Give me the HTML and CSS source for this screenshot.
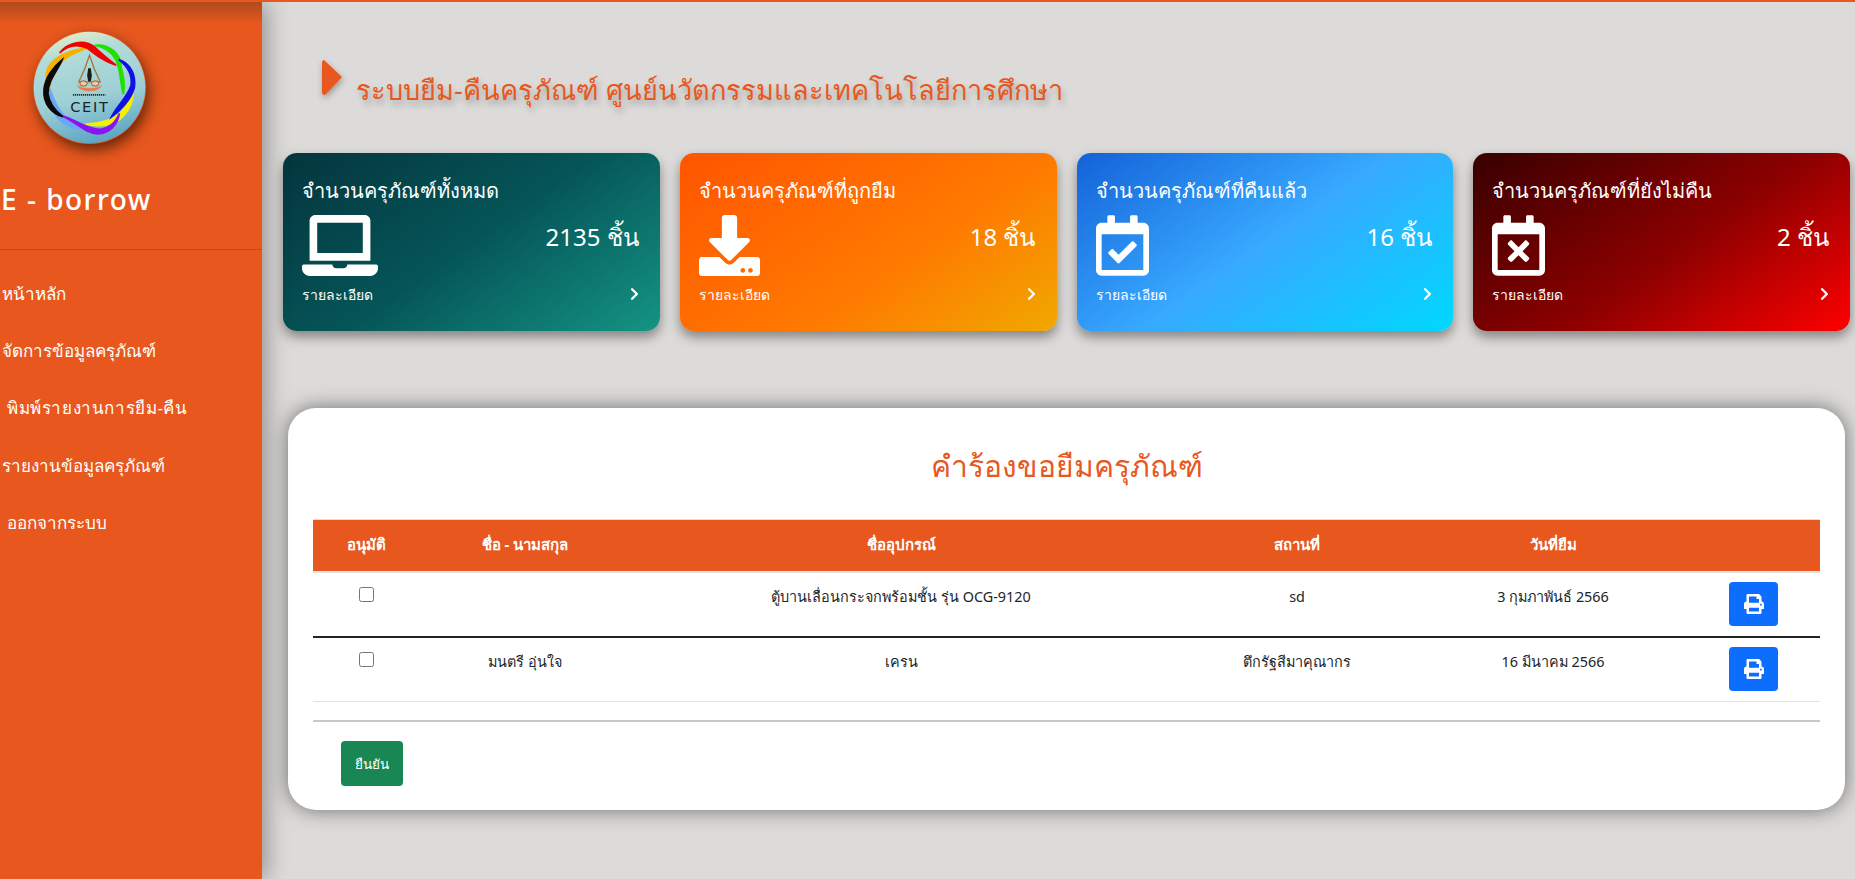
FILE: index.html
```html
<!DOCTYPE html>
<html lang="th">
<head>
    <meta charset="UTF-8">
    <meta name="viewport" content="width=device-width, initial-scale=1.0">
    <title>E - borrow</title>
    <link rel="stylesheet" href="styles.css">
</head>
<body>
    <aside class="sidebar">
        <div class="logo">
            <svg class="logo-img" viewBox="100 92 340 340" role="img" aria-label="CEIT">
                <defs>
                    <linearGradient id="logoBg" x1="0.35" y1="0" x2="0.6" y2="1">
                        <stop offset="0" stop-color="#e6ecc4"/>
                        <stop offset="0.18" stop-color="#b2dcd8"/>
                        <stop offset="0.6" stop-color="#9ccfd6"/>
                        <stop offset="1" stop-color="#5aa4c2"/>
                    </linearGradient>
                </defs>
                <circle cx="270" cy="262" r="168" fill="url(#logoBg)"/>
                <path fill="#6aa8f5" stroke="#6aa8f5" stroke-width="5" d="M150 265C165 300 175 350 250 388C200 385 170 360 158 320C152 300 150 285 150 265Z"/>
                <path fill="#f5b000" stroke="#f5b000" stroke-width="5" d="M140 235C135 190 175 155 265 142C225 160 170 165 148 265Z"/>
                <path fill="#22e000" stroke="#22e000" stroke-width="5" d="M285 135C330 130 365 160 365 200C372 230 378 250 372 282C362 250 365 215 350 180C335 150 310 140 285 135Z"/>
                <path fill="#f00000" stroke="#f00000" stroke-width="5" d="M180 158C205 125 255 115 285 140C305 160 330 180 350 195C315 185 290 165 265 145C235 130 205 135 180 158Z"/>
                <path fill="#f6f000" stroke="#f6f000" stroke-width="5" d="M400 268C405 310 380 350 345 368C320 378 285 380 258 372C300 370 340 360 365 335C385 315 395 295 400 268Z"/>
                <path fill="#1010e8" stroke="#1010e8" stroke-width="5" d="M358 178C395 190 410 225 405 262C395 300 360 335 335 352C350 320 385 290 395 255C400 220 380 195 358 178Z"/>
                <path fill="#8a14f0" stroke="#8a14f0" stroke-width="5" d="M185 347C220 352 250 385 300 388C330 385 350 365 360 340C355 375 330 400 295 402C255 400 230 365 185 347Z"/>
                <path fill="#0a0a0a" stroke="#0a0a0a" stroke-width="5" d="M188 178C175 210 145 240 145 280C150 315 170 335 190 350C155 340 130 310 133 270C135 235 160 200 188 178Z"/>
                <path fill="none" stroke="#a8733c" stroke-width="4" d="M270 165L256 205L238 245H302L284 205Z"/>
                <path fill="#1b1b1b" d="M266 204h8l3 22-3 18h-8l-3-18Z"/>
                <path fill="#ee7a45" d="M232 252C236 280 304 280 308 252C300 268 240 268 232 252Z"/>
                <ellipse cx="252" cy="250" rx="11" ry="8" fill="#e8c9a0" stroke="#a8532c" stroke-width="3"/>
                <ellipse cx="287" cy="250" rx="11" ry="8" fill="#e8c9a0" stroke="#a8532c" stroke-width="3"/>
                <path fill="none" stroke="#333" stroke-width="5" stroke-dasharray="4 2" d="M220 284H318"/>
                <text class="logo-text" x="271" y="337" text-anchor="middle">CEIT</text>
            </svg>
        </div>
        <h2 class="brand">E - borrow</h2>
        <ul class="menu">
            <li><a href="#">หน้าหลัก</a></li>
            <li><a href="#">จัดการข้อมูลครุภัณฑ์</a></li>
            <li><a class="indent wide" href="#">พิมพ์รายงานการยืม-คืน</a></li>
            <li><a href="#">รายงานข้อมูลครุภัณฑ์</a></li>
            <li><a class="indent" href="#">ออกจากระบบ</a></li>
        </ul>
    </aside>

    <main class="content">
        <div class="page-title">
            <svg class="pennant" viewBox="0 0 20 35"><path d="M2 0L20 17L3 35Q0 35 0 32V3Q0 0 2 0Z"/></svg>
            <h1>ระบบยืม-คืนครุภัณฑ์ ศูนย์นวัตกรรมและเทคโนโลยีการศึกษา</h1>
        </div>

        <!-- การ์ดสรุป -->
        <section class="cards">
            <div class="card card-all">
                <h3>จำนวนครุภัณฑ์ทั้งหมด</h3>
                <div class="card-body">
                    <svg class="icon-laptop" viewBox="0 0 640 512"><path d="M624 416H381.54c-.74 19.81-14.71 32-32.74 32H288c-18.69 0-33.02-17.47-32.77-32H16c-8.8 0-16 7.2-16 16v16c0 35.2 28.8 64 64 64h512c35.2 0 64-28.8 64-64v-16c0-8.8-7.2-16-16-16zM576 48c0-26.4-21.6-48-48-48H112C85.6 0 64 21.6 64 48v336h512V48zm-64 272H128V64h384v256z"/></svg>
                    <span class="count">2135 ชิ้น</span>
                </div>
                <div class="card-foot">
                    <span>รายละเอียด</span>
                    <svg class="chevron" viewBox="0 0 320 512"><path d="M285.476 272.971L91.132 467.314c-9.373 9.373-24.569 9.373-33.941 0l-22.667-22.667c-9.357-9.357-9.375-24.522-.04-33.901L188.505 256 34.484 101.255c-9.335-9.379-9.317-24.544.04-33.901l22.667-22.667c9.373-9.373 24.569-9.373 33.941 0L285.475 239.03c9.373 9.372 9.373 24.568.001 33.941z"/></svg>
                </div>
            </div>
            <div class="card card-borrowed">
                <h3>จำนวนครุภัณฑ์ที่ถูกยืม</h3>
                <div class="card-body">
                    <svg class="icon-download" viewBox="0 0 512 512"><path d="M216 0h80c13.3 0 24 10.7 24 24v168h87.7c17.8 0 26.7 21.5 14.1 34.1L269.7 378.3c-7.5 7.5-19.8 7.5-27.3 0L90.1 226.1c-12.6-12.6-3.7-34.1 14.1-34.1H192V24c0-13.3 10.7-24 24-24zm296 376v112c0 13.3-10.7 24-24 24H24c-13.3 0-24-10.7-24-24V376c0-13.3 10.7-24 24-24h146.7l49 49c20.1 20.1 52.5 20.1 72.6 0l49-49H488c13.3 0 24 10.7 24 24zm-124 88c0-11-9-20-20-20s-20 9-20 20 9 20 20 20 20-9 20-20zm64 0c0-11-9-20-20-20s-20 9-20 20 9 20 20 20 20-9 20-20z"/></svg>
                    <span class="count">18 ชิ้น</span>
                </div>
                <div class="card-foot">
                    <span>รายละเอียด</span>
                    <svg class="chevron" viewBox="0 0 320 512"><path d="M285.476 272.971L91.132 467.314c-9.373 9.373-24.569 9.373-33.941 0l-22.667-22.667c-9.357-9.357-9.375-24.522-.04-33.901L188.505 256 34.484 101.255c-9.335-9.379-9.317-24.544.04-33.901l22.667-22.667c9.373-9.373 24.569-9.373 33.941 0L285.475 239.03c9.373 9.372 9.373 24.568.001 33.941z"/></svg>
                </div>
            </div>
            <div class="card card-returned">
                <h3>จำนวนครุภัณฑ์ที่คืนแล้ว</h3>
                <div class="card-body">
                    <svg class="icon-calendar" viewBox="0 0 448 512"><path d="M400 64h-48V12c0-6.627-5.373-12-12-12h-40c-6.627 0-12 5.373-12 12v52H160V12c0-6.627-5.373-12-12-12h-40c-6.627 0-12 5.373-12 12v52H48C21.49 64 0 85.49 0 112v352c0 26.51 21.49 48 48 48h352c26.51 0 48-21.49 48-48V112c0-26.51-21.49-48-48-48zm-6 400H54a6 6 0 0 1-6-6V160h352v298a6 6 0 0 1-6 6zm-52.849-200.65L198.842 404.519c-4.705 4.667-12.303 4.637-16.971-.068l-75.091-75.699c-4.667-4.705-4.637-12.303.068-16.971l22.719-22.536c4.705-4.667 12.303-4.637 16.97.069l44.104 44.461 111.072-110.181c4.705-4.667 12.303-4.637 16.971.068l22.536 22.718c4.667 4.705 4.636 12.303-.069 16.97z"/></svg>
                    <span class="count">16 ชิ้น</span>
                </div>
                <div class="card-foot">
                    <span>รายละเอียด</span>
                    <svg class="chevron" viewBox="0 0 320 512"><path d="M285.476 272.971L91.132 467.314c-9.373 9.373-24.569 9.373-33.941 0l-22.667-22.667c-9.357-9.357-9.375-24.522-.04-33.901L188.505 256 34.484 101.255c-9.335-9.379-9.317-24.544.04-33.901l22.667-22.667c9.373-9.373 24.569-9.373 33.941 0L285.475 239.03c9.373 9.372 9.373 24.568.001 33.941z"/></svg>
                </div>
            </div>
            <div class="card card-pending">
                <h3>จำนวนครุภัณฑ์ที่ยังไม่คืน</h3>
                <div class="card-body">
                    <svg class="icon-calendar" viewBox="0 0 448 512"><path d="M311.7 374.7l-17 17c-4.7 4.7-12.3 4.7-17 0L224 337.9l-53.7 53.7c-4.7 4.7-12.3 4.7-17 0l-17-17c-4.7-4.7-4.7-12.3 0-17l53.7-53.7-53.7-53.7c-4.7-4.7-4.7-12.3 0-17l17-17c4.7-4.7 12.3-4.7 17 0l53.7 53.7 53.7-53.7c4.7-4.7 12.3-4.7 17 0l17 17c4.7 4.7 4.7 12.3 0 17L257.9 304l53.7 53.7c4.8 4.7 4.8 12.3.1 17zM448 112v352c0 26.5-21.5 48-48 48H48c-26.5 0-48-21.5-48-48V112c0-26.5 21.5-48 48-48h48V12c0-6.6 5.4-12 12-12h40c6.6 0 12 5.4 12 12v52h128V12c0-6.6 5.4-12 12-12h40c6.6 0 12 5.4 12 12v52h48c26.5 0 48 21.5 48 48zm-48 346V160H48v298c0 3.3 2.7 6 6 6h340c3.3 0 6-2.7 6-6z"/></svg>
                    <span class="count">2 ชิ้น</span>
                </div>
                <div class="card-foot">
                    <span>รายละเอียด</span>
                    <svg class="chevron" viewBox="0 0 320 512"><path d="M285.476 272.971L91.132 467.314c-9.373 9.373-24.569 9.373-33.941 0l-22.667-22.667c-9.357-9.357-9.375-24.522-.04-33.901L188.505 256 34.484 101.255c-9.335-9.379-9.317-24.544.04-33.901l22.667-22.667c9.373-9.373 24.569-9.373 33.941 0L285.475 239.03c9.373 9.372 9.373 24.568.001 33.941z"/></svg>
                </div>
            </div>
        </section>

        <!-- คำร้องขอยืม -->
        <section class="panel">
            <h2 class="panel-title">คำร้องขอยืมครุภัณฑ์</h2>
            <table class="request-table">
                <thead>
                    <tr>
                        <th class="col-check">อนุมัติ</th>
                        <th class="col-name">ชื่อ - นามสกุล</th>
                        <th class="col-item">ชื่ออุปกรณ์</th>
                        <th class="col-place">สถานที่</th>
                        <th class="col-date">วันที่ยืม</th>
                        <th class="col-print"></th>
                    </tr>
                </thead>
                <tbody>
                    <tr class="row-first">
                        <td><input class="check" type="checkbox"></td>
                        <td></td>
                        <td>ตู้บานเลื่อนกระจกพร้อมชั้น รุ่น OCG-9120</td>
                        <td>sd</td>
                        <td>3 กุมภาพันธ์ 2566</td>
                        <td><button class="btn-print" type="button" aria-label="พิมพ์"><svg viewBox="0 0 512 512"><path d="M448 192V77.25c0-8.49-3.37-16.62-9.37-22.63L393.37 9.37c-6-6-14.14-9.37-22.63-9.37H96C78.33 0 64 14.33 64 32v160c-35.35 0-64 28.65-64 64v112c0 8.84 7.16 16 16 16h48v96c0 17.67 14.33 32 32 32h320c17.67 0 32-14.33 32-32v-96h48c8.84 0 16-7.16 16-16V256c0-35.35-28.65-64-64-64zm-64 256H128v-96h256v96zm0-224H128V64h192v48c0 8.84 7.16 16 16 16h48v96zm48 72c-13.25 0-24-10.75-24-24 0-13.26 10.75-24 24-24s24 10.74 24 24c0 13.25-10.75 24-24 24z"/></svg></button></td>
                    </tr>
                    <tr>
                        <td><input class="check" type="checkbox"></td>
                        <td>มนตรี อุ่นใจ</td>
                        <td>เครน</td>
                        <td>ตึกรัฐสีมาคุณากร</td>
                        <td>16 มีนาคม 2566</td>
                        <td><button class="btn-print" type="button" aria-label="พิมพ์"><svg viewBox="0 0 512 512"><path d="M448 192V77.25c0-8.49-3.37-16.62-9.37-22.63L393.37 9.37c-6-6-14.14-9.37-22.63-9.37H96C78.33 0 64 14.33 64 32v160c-35.35 0-64 28.65-64 64v112c0 8.84 7.16 16 16 16h48v96c0 17.67 14.33 32 32 32h320c17.67 0 32-14.33 32-32v-96h48c8.84 0 16-7.16 16-16V256c0-35.35-28.65-64-64-64zm-64 256H128v-96h256v96zm0-224H128V64h192v48c0 8.84 7.16 16 16 16h48v96zm48 72c-13.25 0-24-10.75-24-24 0-13.26 10.75-24 24-24s24 10.74 24 24c0 13.25-10.75 24-24 24z"/></svg></button></td>
                    </tr>
                </tbody>
            </table>
            <hr class="divider">
            <button class="btn-confirm" type="button">ยืนยัน</button>
        </section>
    </main>
</body>
</html>
```

FILE: styles.css
```css
/* ทั่วไป */
* {
    box-sizing: border-box;
}

html, body {
    height: 100%;
}

body {
    margin: 0;
    display: flex;
    overflow: hidden;
    background-color: #dcdbd9;
    border-top: 2px solid #e8581e;
    font-family: "Noto Sans", "Liberation Sans", sans-serif;
    color: #212529;
}

/* แถบเมนู */
.sidebar {
    width: 262px;
    flex-shrink: 0;
    height: calc(100vh - 2px);
    background: linear-gradient(to bottom, #b04a1c 0, #e8581e 22px);
    color: white;
    box-shadow: 4px 0 22px rgba(0, 0, 0, 0.35);
    position: relative;
    overflow: hidden;
}

.logo {
    padding: 29px 0 0 33px;
    height: 169px;
}

.logo-img {
    display: block;
    width: 113px;
    height: 113px;
    border-radius: 50%;
    box-shadow: 3px 6px 14px rgba(60, 20, 0, 0.75);
}

.logo-text {
    font-family: "DejaVu Sans", "Liberation Sans", sans-serif;
    font-size: 44px;
    letter-spacing: 5px;
    fill: #1c2326;
}

.brand {
    margin: 0;
    padding: 0 0 0 1px;
    height: 79px;
    border-bottom: 1px solid #c44a17;
    font-size: 28px;
    font-weight: 500;
    line-height: 56px;
    letter-spacing: 1.5px;
}

.menu {
    list-style: none;
    margin: 0;
    padding: 14.5px 0 0 2px;
}

.menu li {
    height: 57.4px;
    line-height: 57px;
    font-size: 17px;
}

.menu a {
    color: white;
    text-decoration: none;
}

.menu .indent {
    margin-left: 5px;
}

.menu .wide {
    letter-spacing: 0.6px;
}

/* เนื้อหา */
.content {
    flex: 1;
    min-width: 0;
    padding: 0 5px 0 21px;
}

.page-title {
    height: 151px;
    display: flex;
    align-items: flex-start;
    padding: 58px 0 0 39px;
}

.pennant {
    width: 20px;
    height: 35px;
    fill: #e8581e;
    filter: drop-shadow(1px 3px 3px rgba(0, 0, 0, 0.3));
}

.page-title h1 {
    margin: 8px 0 0 14px;
    font-size: 27.2px;
    font-weight: 400;
    line-height: 44px;
    color: #e8581e;
    text-shadow: 2px 5px 6px rgba(0, 0, 0, 0.25);
}

/* การ์ด */
.cards {
    display: grid;
    grid-template-columns: repeat(4, 376.75px);
    gap: 20px;
}

.card {
    height: 178px;
    padding: 24px 19px 0;
    border-radius: 14px;
    color: white;
    box-shadow: 0 6px 12px rgba(0, 0, 0, 0.4);
}

.card h3 {
    margin: 0;
    height: 38px;
    font-size: 20px;
    font-weight: 400;
    line-height: 28px;
}

.card-body {
    display: flex;
    justify-content: space-between;
    height: 61px;
}

.card-body svg {
    fill: white;
    height: 61px;
}

.icon-laptop {
    width: 76px;
}

.icon-download {
    width: 61px;
}

.icon-calendar {
    width: 53px;
}

.count {
    font-size: 24px;
    line-height: 44px;
    padding-right: 2px;
}

.card-foot {
    display: flex;
    justify-content: space-between;
    align-items: center;
    padding: 8px 2px 0 0;
    font-size: 14px;
    line-height: 22px;
}

.chevron {
    width: 9px;
    height: 14px;
    margin-bottom: 3px;
    fill: white;
}

.card-all {
    background: linear-gradient(145deg, #04353d 0%, #055558 50%, #149483 100%);
}

.card-borrowed {
    background: linear-gradient(145deg, #ff5500 0%, #ff7a00 60%, #f0a800 100%);
}

.card-returned {
    background: linear-gradient(145deg, #1462d8 0%, #38a9ff 50%, #00d8ff 100%);
}

.card-pending {
    background: linear-gradient(145deg, #380000 0%, #8e0000 55%, #ff0000 100%);
}

/* ตาราง */
.panel {
    margin: 77px 5px 0;
    height: 402px;
    padding: 0 25px;
    background: white;
    border-radius: 28px;
    box-shadow: 0 0 20px rgba(0, 0, 0, 0.5);
}

.panel-title {
    margin: 0;
    height: 111px;
    padding-top: 34px;
    text-align: center;
    font-size: 30px;
    font-weight: 300;
    line-height: 48px;
    color: #e8581e;
}

.request-table {
    width: 100%;
    table-layout: fixed;
    border-collapse: collapse;
    font-size: 14.4px;
}

.request-table th {
    height: 52px;
    background-color: #e8581e;
    color: white;
    font-size: 15px;
    font-weight: 700;
    text-align: center;
    border-top: 1px solid #ddd;
    border-bottom: 2px solid #e4e4e4;
}

.request-table td {
    height: 65px;
    padding: 8px;
    text-align: center;
    vertical-align: top;
    line-height: 32px;
    border-bottom: 1px solid #e2e2e2;
}

.request-table .row-first td {
    border-bottom: 2px solid #212529;
}

.col-check { width: 106px; }
.col-name { width: 212px; }
.col-item { width: 540px; }
.col-place { width: 252px; }
.col-date { width: 260px; }

.check {
    width: 15px;
    height: 15px;
    margin: 6px 0 0;
    vertical-align: top;
}

.btn-print {
    display: block;
    width: 49px;
    height: 44px;
    margin: 1px 0 0 38px;
    padding: 0;
    border: none;
    border-radius: 4px;
    background-color: #0d6efd;
}

.btn-print svg {
    display: block;
    width: 20px;
    height: 20px;
    margin: 0 auto;
    fill: white;
}

.divider {
    margin: 18px 0 0;
    border: none;
    border-top: 2px solid #c8c8c8;
}

.btn-confirm {
    display: block;
    width: 62px;
    height: 45px;
    margin: 19px 0 0 28px;
    padding: 0;
    border: none;
    border-radius: 4px;
    background-color: #198754;
    color: white;
    font-family: inherit;
    font-size: 13.5px;
}
```
